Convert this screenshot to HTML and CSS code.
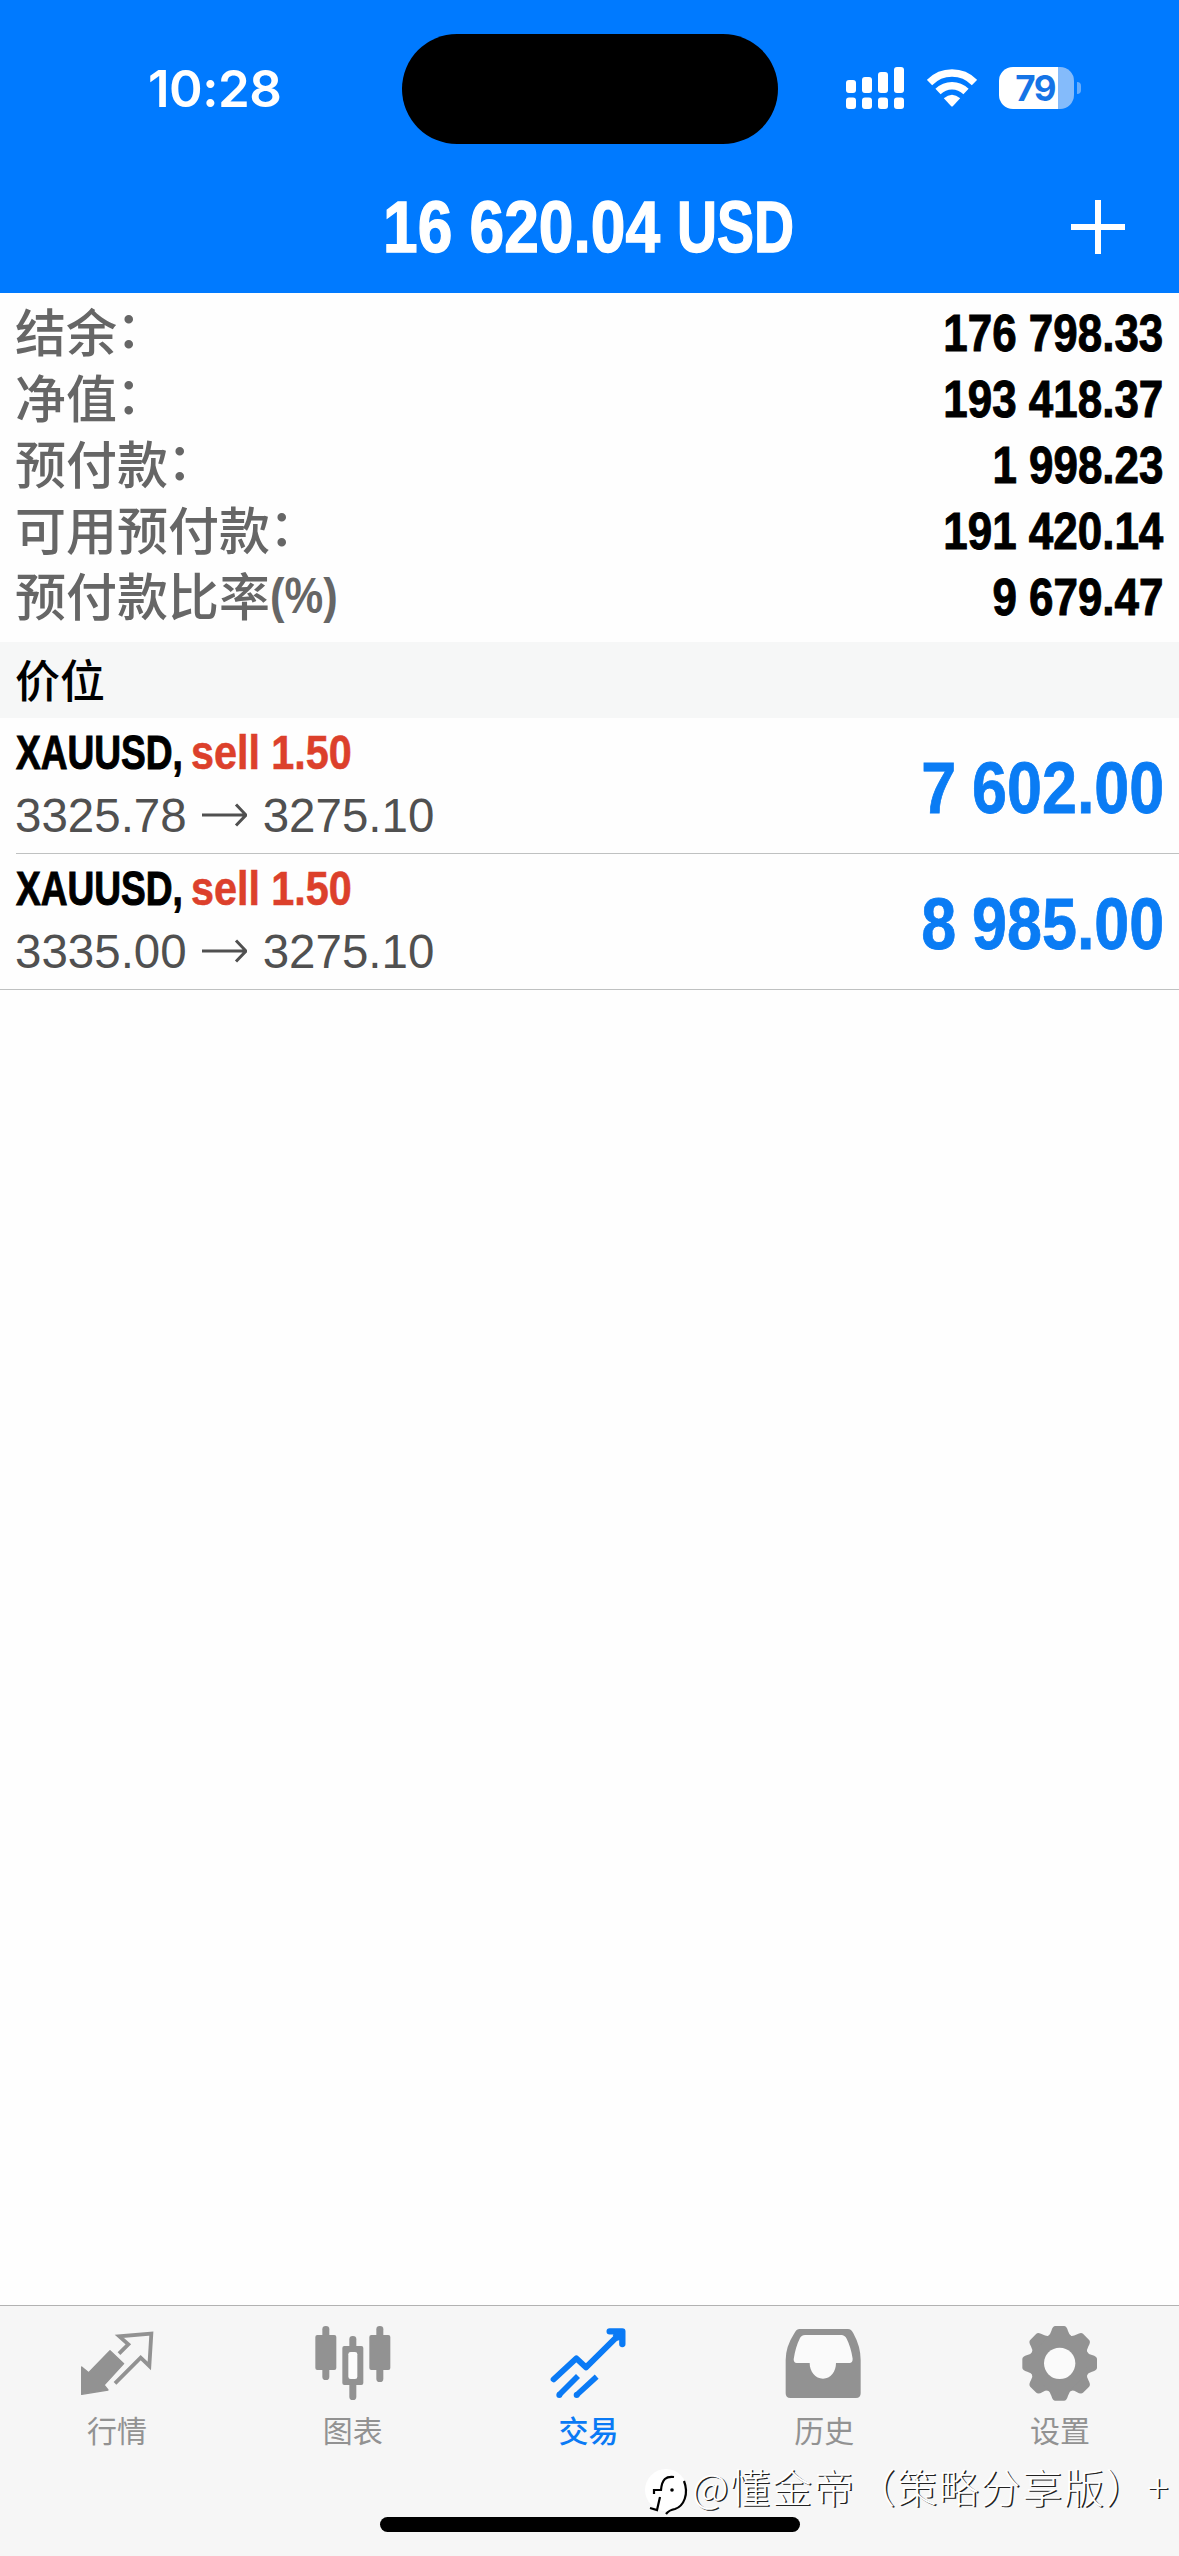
FILE: index.html
```html
<!DOCTYPE html>
<html lang="zh-CN">
<head>
<meta charset="utf-8">
<title>交易</title>
<link rel="stylesheet" href="styles.css">
</head>
<body>
<div class="screen">
  <header class="header">
    <div class="status">
      <span class="time">10:28</span>
      <div class="island"></div>
      <div class="indicators">
        <svg class="signal" viewBox="0 0 58 42"><g fill="#fff"><rect x="0" y="13" width="10" height="13" rx="3"/><rect x="16" y="10" width="10" height="16" rx="3"/><rect x="32" y="5" width="10" height="21" rx="3"/><rect x="48" y="0" width="10" height="26" rx="3"/><rect x="0" y="30.500" width="10" height="11.500" rx="3"/><rect x="16" y="30.500" width="10" height="11.500" rx="3"/><rect x="32" y="30.500" width="10" height="11.500" rx="3"/><rect x="48" y="30.500" width="10" height="11.500" rx="3"/></g></svg>
        <svg class="wifi" viewBox="0 0 50 38"><g fill="none" stroke="#fff" stroke-width="7.500"><path d="M2.500 13.500C15 .8 35 .8 47.500 13.500"/><path d="M11 22.500C19 14.800 31 14.800 39 22.500"/></g><path fill="#fff" d="M16.800 29.300Q25 22 33.200 29.300L26 37Q25 38 24 37Z"/></svg>
        <div class="battery"><span>79</span></div>
      </div>
    </div>
    <div class="navbar">
      <h1><span class="amount">16 620.04</span> <span class="currency">USD</span></h1>
      <svg class="plus" viewBox="0 0 54 54"><path d="M27 0V54M0 27H54" stroke="#fff" stroke-width="6"/></svg>
    </div>
  </header>

  <dl class="summary">
    <div><dt>结余<i>：</i></dt><dd>176 798.33</dd></div>
    <div><dt>净值<i>：</i></dt><dd>193 418.37</dd></div>
    <div><dt>预付款<i>：</i></dt><dd>1 998.23</dd></div>
    <div><dt>可用预付款<i>：</i></dt><dd>191 420.14</dd></div>
    <div><dt>预付款比率<b>(%)</b></dt><dd>9 679.47</dd></div>
  </dl>

  <h2 class="section">价位</h2>

  <main class="positions">
    <article class="position">
      <div>
        <p class="symbol"><strong>XAUUSD,</strong> <em>sell 1.50</em></p>
        <p class="prices">3325.78<svg class="arrow" viewBox="0 0 45 24"><path d="M0 12H44M34 1.500L44 12L34 22.500"/></svg>3275.10</p>
      </div>
      <span class="profit">7 602.00</span>
    </article>
    <article class="position last">
      <div>
        <p class="symbol"><strong>XAUUSD,</strong> <em>sell 1.50</em></p>
        <p class="prices">3335.00<svg class="arrow" viewBox="0 0 45 24"><path d="M0 12H44M34 1.500L44 12L34 22.500"/></svg>3275.10</p>
      </div>
      <span class="profit">8 985.00</span>
    </article>
  </main>

  <nav class="tabs">
    <a class="tab">
      <svg viewBox="0 0 270 270"><path fill="currentColor" stroke="currentColor" stroke-width="4" stroke-linejoin="round" d="M111 92L152 131L93 195L105 210L26 223V141L47 158Z"/><path fill="none" stroke="currentColor" stroke-width="11.500" d="M138 101L166 73L139 49L235 41L229 138L203 113L126 190"/></svg>
      <span>行情</span>
    </a>
    <a class="tab">
      <svg viewBox="0 0 270 270"><g fill="currentColor"><rect x="19" y="45" width="63" height="105" rx="6"/><rect x="40" y="18" width="21" height="162" rx="10"/><rect x="100" y="78" width="63" height="117" rx="6"/><rect x="121" y="48" width="21" height="192" rx="10"/><rect x="181" y="45" width="63" height="105" rx="6"/><rect x="202" y="18" width="21" height="168" rx="10"/></g><rect x="118" y="96" width="27" height="81" rx="7" fill="#fcfcfc"/></svg>
      <span>图表</span>
    </a>
    <a class="tab active">
      <svg viewBox="0 0 270 270"><g fill="none" stroke="currentColor" stroke-linejoin="round"><path stroke-width="18" stroke-linecap="round" d="M29 178L97 115L126 142L232 37"/><path stroke-width="19" stroke-linecap="round" d="M197 34H235V72"/></g><path fill="currentColor" d="M215 34H235V58L220 62L206 46Z"/><g stroke="currentColor" stroke-width="17"><path d="M45 225L102 168M98 225L158 170"/></g><circle cx="46" cy="225" r="9" fill="currentColor"/><circle cx="98" cy="225" r="9" fill="currentColor"/></svg>
      <span>交易</span>
    </a>
    <a class="tab">
      <svg viewBox="0 0 270 270"><path fill="currentColor" d="M59 27H204Q214 27 220 40Q242 80 242 120V220Q242 234 228 234H31Q17 234 17 220V120Q17 80 43 40Q49 27 59 27Z"/><path fill="#fafafa" d="M75 45H184Q194 45 200 56Q213 82 218 116Q218 129 208 129H168C168 155 152 176 129 176C106 176 89 155 89 129H50Q41 129 41 118Q46 82 60 54Q65 45 75 45Z"/></svg>
      <span>历史</span>
    </a>
    <a class="tab">
      <svg viewBox="0 0 270 270"><defs><path id="tooth" d="M94 50Q103 45 106 33Q110 18 118 18H144Q152 18 156 33Q159 45 168 50Z"/></defs><g fill="currentColor"><circle cx="131" cy="130" r="89"/><use href="#tooth"/><use href="#tooth" transform="rotate(45 131 130)"/><use href="#tooth" transform="rotate(90 131 130)"/><use href="#tooth" transform="rotate(135 131 130)"/><use href="#tooth" transform="rotate(180 131 130)"/><use href="#tooth" transform="rotate(225 131 130)"/><use href="#tooth" transform="rotate(270 131 130)"/><use href="#tooth" transform="rotate(315 131 130)"/></g><circle cx="131" cy="130" r="47" fill="#fafafa"/></svg>
      <span>设置</span>
    </a>
  </nav>

  <div class="home-bar"></div>
  <div class="watermark">
    <svg viewBox="0 0 44 48"><circle cx="21" cy="22" r="21" fill="#fff"/><g fill="none" stroke="#000" stroke-width="2.200"><path d="M9 26V22H16C17 11 21 8 29 9M15 29L12 42L5 40"/><path d="M39 13C44 26 39 38 30 41Q24 42 21 46"/></g><circle cx="27" cy="22" r="1.800"/></svg>
    <span>@懂金帝（策略分享版）+</span>
  </div>
</div>
</body>
</html>
```
FILE: styles.css
```css
* { box-sizing: border-box; margin: 0; padding: 0; }

body {
  width: 1179px;
  height: 2556px;
  background: #fefefe;
  color: #000;
  font-family: "Liberation Sans", "Noto Sans CJK SC", sans-serif;
}

.screen {
  position: relative;
  display: flex;
  flex-direction: column;
  height: 2556px;
  overflow: hidden;
}

.header { height: 293px; background: #007aff; color: #fff; }

.status {
  display: grid;
  grid-template-columns: 402px 376px 1fr;
  height: 160px;
  padding-top: 33.500px;
}
.time {
  padding-left: 148px;
  font: 600 51px/109px Inter, sans-serif;
  letter-spacing: -0.5px;
}
.island { height: 110.500px; border-radius: 56px; background: #000; }
.indicators { display: flex; height: 108px; padding-left: 68px; align-items: center; }
.signal { width: 58px; height: 42px; }
.wifi { width: 50px; height: 38px; margin-left: 22.500px; }
.battery {
  position: relative;
  width: 75px;
  height: 42px;
  margin-left: 22px;
  padding-right: 2px;
  border-radius: 14px;
  background: linear-gradient(90deg, #fff 59px, #84bbfb 59px);
  color: #1574e6;
  font: 700 35px/42px Inter, sans-serif;
  letter-spacing: -1.500px;
  text-align: center;
}
.battery::after {
  content: "";
  position: absolute;
  left: 78px;
  top: 15px;
  width: 4px;
  height: 12px;
  border-radius: 0 4px 4px 0;
  background: #69adfb;
}

.navbar {
  display: grid;
  grid-template-columns: 1fr 414px 1fr;
  height: 133px;
  align-items: center;
}

/* Condensed bold figures: the regular bold face, narrowed */
h1, dd, dt b, .symbol, .profit {
  font-family: "Liberation Sans", sans-serif;
  font-weight: 700;
  white-space: nowrap;
}
.amount, .currency, dt b, .symbol strong, .symbol em { display: block; transform-origin: left; }
.profit, dd { transform-origin: right; }

h1 {
  grid-column: 2;
  display: grid;
  grid-template-columns: 294px 120px;
  font-size: 73px;
  line-height: 133px;
  -webkit-text-stroke: 1.400px #fff;
}
.amount { transform: scaleX(0.853); }
.currency { transform: scaleX(0.76); }
.plus { justify-self: end; width: 54px; height: 54px; margin-right: 54px; }

.summary { height: 349px; padding: 7px 16px 0 15px; }
.summary > div { display: flex; justify-content: space-between; height: 66px; }
dt {
  display: flex;
  color: #666;
  font: 500 51px/60px "Noto Sans CJK SC", sans-serif;
}
dt i { font-style: normal; transform: translate(-1px, -4px); }
dt b { font-size: 50px; line-height: 65px; transform: scaleX(0.87); }
dd {
  font-size: 52px;
  line-height: 66px;
  transform: scaleX(0.845);
  -webkit-text-stroke: 1px #000;
}

.section {
  height: 76px;
  padding-left: 15px;
  background: #f6f7f7;
  font: 500 45px/74px "Noto Sans CJK SC", sans-serif;
}

.positions { flex: 1; }
.position {
  display: flex;
  justify-content: space-between;
  height: 136px;
  margin-left: 16px;
  padding: 5px 15px 0 0;
  border-bottom: 1px solid #bfc1c1;
}
.position.last { margin-left: 0; padding-left: 16px; }
.symbol {
  display: grid;
  grid-template-columns: 175px 165px;
  font-size: 48px;
  line-height: 60px;
}
.symbol strong { transform: scaleX(0.772); -webkit-text-stroke: 1px #000; }
.symbol em {
  color: #dc402b;
  font-style: normal;
  transform: scaleX(0.86);
  -webkit-text-stroke: 0.600px #dc402b;
}
.prices { margin-left: -1px; color: #505050; font-size: 47.500px; line-height: 66px; }
.arrow { width: 45px; height: 24px; margin: 0 16px 0 15px; vertical-align: 5px; }
.arrow path { fill: none; stroke: #505050; stroke-width: 3; }
.profit {
  color: #0a7cf4;
  font-size: 72px;
  line-height: 130px;
  word-spacing: -2px;
  transform: scaleX(0.873);
  -webkit-text-stroke: 0.800px #0a7cf4;
}

.tabs {
  display: grid;
  grid-template-columns: repeat(5, 1fr);
  height: 251px;
  padding-top: 14px;
  border-top: 1px solid #b2b2b2;
  background: #f6f6f6;
}
.tab { display: flex; flex-direction: column; align-items: center; color: #929292; }
.tab svg { width: 90px; height: 90px; }
.tab span { padding-right: 2px; font: 400 30px/38px "Noto Sans CJK SC", sans-serif; }
.tab.active { color: #0a7af5; }
.tab.active span { font-weight: 500; }

.home-bar {
  position: absolute;
  left: 380px;
  top: 2517px;
  width: 420px;
  height: 15px;
  border-radius: 8px;
  background: #000;
}
.watermark {
  position: absolute;
  left: 645px;
  top: 2458px;
  display: flex;
  height: 56px;
  align-items: center;
  color: #fff;
  white-space: nowrap;
}
.watermark svg { width: 44px; height: 48px; margin-top: 12px; }
.watermark span {
  margin-left: 3px;
  font: 300 40px/56px "Noto Sans CJK SC", sans-serif;
  letter-spacing: 1.700px;
  text-shadow: 1.500px 1px 0 #222;
}
```
